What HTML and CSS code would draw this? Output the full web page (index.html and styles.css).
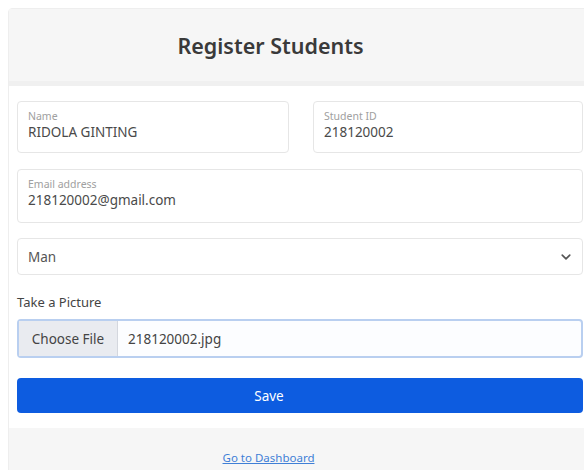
FILE: index.html
```html
<!DOCTYPE html>
<html lang="en">
<head>
<meta charset="utf-8">
<title>Register Students</title>
<link rel="stylesheet" href="styles.css">
</head>
<body>
<div class="card">
  <div class="card-header">
    <h1 class="title">Register Students</h1>
  </div>
  <form class="card-body">
    <div class="row">
      <div class="floating">
        <span class="float-label">Name</span>
        <span class="float-value">RIDOLA GINTING</span>
      </div>
      <div class="floating">
        <span class="float-label">Student ID</span>
        <span class="float-value">218120002</span>
      </div>
    </div>
    <div class="floating email">
      <span class="float-label">Email address</span>
      <span class="float-value">218120002@gmail.com</span>
    </div>
    <div class="select">
      <span class="select-value">Man</span>
      <svg class="chevron" width="10" height="10" viewBox="0 0 16 16"><path d="M2 5l6 6 6-6" fill="none" stroke="#555" stroke-width="2.6" stroke-linecap="round" stroke-linejoin="round"/></svg>
    </div>
    <div class="file-label">Take a Picture</div>
    <div class="file-input">
      <span class="file-btn">Choose File</span>
      <span class="file-name">218120002.jpg</span>
    </div>
    <button type="button" class="save">Save</button>
  </form>
  <div class="card-footer">
    <a class="dash-link" href="#">Go to Dashboard</a>
  </div>
</div>
</body>
</html>
```
FILE: styles.css
```css
html { overflow: hidden; }
body {
  margin: 8px 0 0 8px;
  background: #fff;
  font-family: "Noto Sans", "Open Sans", sans-serif;
  color: #333;
}
.card {
  width: 583px;
  background: #fff;
  border: 1px solid #eeeeee;
  border-radius: 4px;
}
.card-header {
  height: 72px;
  padding-right: 60px;
  background: #f6f6f6;
  border-bottom: 5px solid #f0f0f0;
  display: flex;
  align-items: center;
  justify-content: center;
}
.title {
  margin: 0;
  font-size: 21.5px;
  font-weight: 600;
  color: #3a3a3a;
}
.card-body {
  padding: 15px 9px 15px 8px;
  display: flex;
  flex-direction: column;
}
.row {
  display: grid;
  grid-template-columns: 272px 1fr;
  gap: 24px;
  margin-bottom: 16px;
}
.floating {
  height: 52px;
  box-sizing: border-box;
  border: 1px solid #e6e6e6;
  border-radius: 4px;
  padding: 8px 10px 0;
  display: flex;
  flex-direction: column;
}
.floating.email { height: 54px; margin-bottom: 15px; }
.float-label {
  font-size: 10.5px;
  color: #a0a0a0;
  line-height: 13px;
}
.float-value {
  font-size: 13.5px;
  color: #4a4a4a;
  line-height: 19px;
}
.select {
  height: 37px;
  box-sizing: border-box;
  border: 1px solid #e6e6e6;
  border-radius: 4px;
  padding: 0 10px;
  display: flex;
  align-items: center;
  justify-content: space-between;
}
.select-value { font-size: 13.5px; color: #555; }
.chevron { margin-right: 1px; }
.file-label {
  font-size: 13px;
  color: #444;
  margin: 18px 0 8px;
  line-height: 18px;
}
.file-input {
  height: 39px;
  box-sizing: border-box;
  border: 2px solid #b9cff0;
  border-radius: 4px;
  display: flex;
  align-items: stretch;
  font-size: 13.5px;
  color: #444;
  background: #fcfdff;
}
.file-btn {
  width: 98px;
  background: #e9ebf0;
  border-right: 1px solid #d4d7de;
  display: flex;
  align-items: center;
  justify-content: center;
}
.file-name {
  display: flex;
  align-items: center;
  padding-left: 10px;
}
.save {
  margin-top: 20px;
  height: 35px;
  padding: 0 62px 0 0;
  border: none;
  border-radius: 4px;
  background: #0d5ce0;
  color: #fff;
  font-family: inherit;
  font-size: 13.5px;
}
.card-footer {
  background: #f6f6f6;
  padding: 19px 64px 30px 0;
  text-align: center;
  line-height: 18px;
}
.dash-link {
  color: #3f7fd6;
  font-size: 11.5px;
}
```
